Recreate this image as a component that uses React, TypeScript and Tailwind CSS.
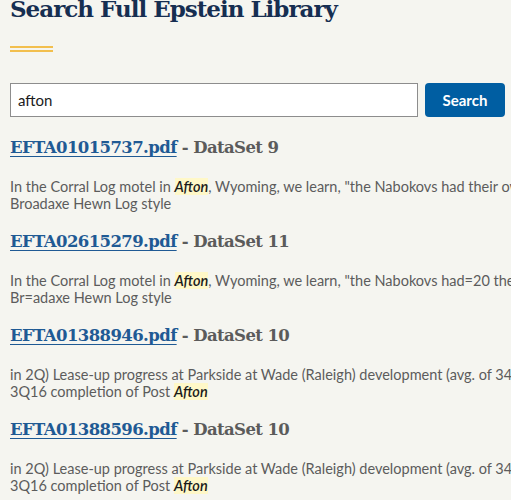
import React from "react";

const serif = { fontFamily: '"DejaVu Serif", "Liberation Serif", serif' };
const sans = { fontFamily: '"Lato", "Roboto", sans-serif' };

type R = { file: string; ds: string; l1: React.ReactNode; l2: React.ReactNode };

const Hl = () => (
  <span className="bg-[#fff8c8] italic font-semibold text-[#1b1b1b]">Afton</span>
);

const results: R[] = [
  {
    file: "EFTA01015737.pdf",
    ds: "DataSet 9",
    l1: (
      <>
        In the Corral Log motel in <Hl />, Wyoming, we learn, "the Nabokovs had their own cabin in the
      </>
    ),
    l2: <>Broadaxe Hewn Log style</>,
  },
  {
    file: "EFTA02615279.pdf",
    ds: "DataSet 11",
    l1: (
      <>
        In the Corral Log motel in <Hl />, Wyoming, we learn, "the Nabokovs had=20 their own cabin in
      </>
    ),
    l2: <>Br=adaxe Hewn Log style</>,
  },
  {
    file: "EFTA01388946.pdf",
    ds: "DataSet 10",
    l1: <>in 2Q) Lease-up progress at Parkside at Wade (Raleigh) development (avg. of 34 units per month)</>,
    l2: (
      <>
        3Q16 completion of Post <Hl />
      </>
    ),
  },
  {
    file: "EFTA01388596.pdf",
    ds: "DataSet 10",
    l1: <>in 2Q) Lease-up progress at Parkside at Wade (Raleigh) development (avg. of 34 units per month)</>,
    l2: (
      <>
        3Q16 completion of Post <Hl />
      </>
    ),
  },
];

export default function App() {
  return (
    <div className="w-[511px] h-[500px] overflow-hidden bg-[#f5f5f0]">
      <div className="pl-[10px]">
        <h1
          style={serif}
          className="text-[23px] leading-[30px] font-bold tracking-[-1px] text-[#162e51] mt-[-6px] whitespace-nowrap"
        >
          Search Full Epstein Library
        </h1>
        <div className="mt-[22px] w-[43px] flex flex-col gap-[2px]">
          <div className="h-[2px] bg-[#f2bf4e]" />
          <div className="h-[2px] bg-[#f2bf4e]" />
        </div>
        <div className="mt-[31px] flex gap-[7px] items-stretch" style={sans}>
          <div className="w-[408px] h-[34px] border border-[#8d8d8d] bg-white flex items-center px-[7px] text-[15px] text-[#1b1b1b]">
            afton
          </div>
          <div className="w-[80px] h-[34px] rounded-[4px] bg-[#005ea2] text-white font-bold text-[15px] flex items-center justify-center">
            Search
          </div>
        </div>
        <div className="mt-[19px] flex flex-col gap-[18px]">
          {results.map((r, i) => (
            <div key={i}>
              <div
                style={serif}
                className="text-[16.5px] leading-[24px] font-bold tracking-[-0.6px] whitespace-nowrap"
              >
                <span className="text-[#1f5a94] underline underline-offset-[3px] decoration-[1px]">{r.file}</span>
                <span className="text-[#5b5b5b]"> - {r.ds}</span>
              </div>
              <div
                className="mt-[18px] text-[14.5px] leading-[17px] text-[#5c5c5c] whitespace-nowrap"
                style={sans}
              >
                <div>{r.l1}</div>
                <div>{r.l2}</div>
              </div>
            </div>
          ))}
        </div>
      </div>
    </div>
  );
}
